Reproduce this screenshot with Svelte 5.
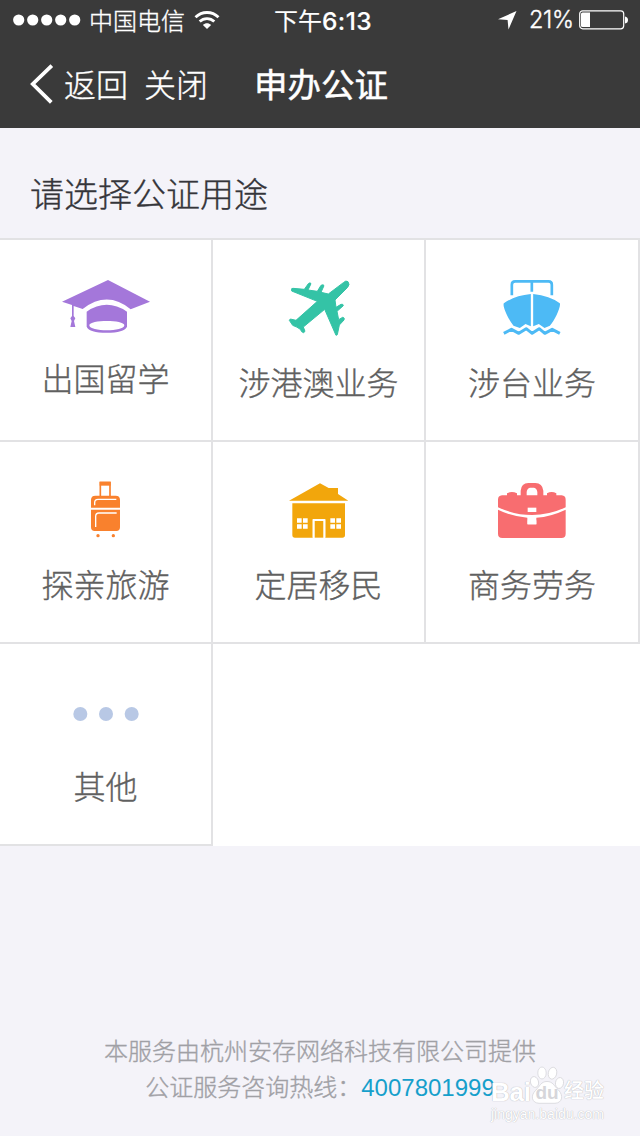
<script lang="ts">
  interface Category {
    icon: string;
    label: string;
    viewBox: string;
  }

  const categories: Category[] = [
    { icon: "cap", label: "出国留学", viewBox: "15 15 303 195" },
    { icon: "plane", label: "涉港澳业务", viewBox: "-36 15 303 195" },
    { icon: "ship", label: "涉台业务", viewBox: "-22.5 15 303 195" },
    { icon: "luggage", label: "探亲旅游", viewBox: "-60 6 303 195" },
    { icon: "house", label: "定居移民", viewBox: "-36 6 303 195" },
    { icon: "briefcase", label: "商务劳务", viewBox: "-24 6 303 195" },
    { icon: "more", label: "其他", viewBox: "165 147 303 195" },
  ];
</script>

<div class="screen">
  <header>
    <div class="status">
      <svg class="signal" width="68" height="12" viewBox="0 0 68 12" fill="#fff">
        {#each [0, 1, 2, 3, 4] as i}
          <circle cx={5.7 + i * 14} cy="6" r="5.6" />
        {/each}
      </svg>
      <span class="carrier">中国电信</span>
      <svg class="wifi" width="26" height="20" viewBox="0 0 26 20" fill="none" stroke="#fff" stroke-width="2.8">
        <path d="M1.5 7.3C8 .9 18 .9 24.5 7.3" />
        <path d="M5.7 11.6C9.8 7.6 16.2 7.6 20.3 11.6" />
        <path d="M13 19L8.9 14.9C11.3 12.7 14.7 12.7 17.1 14.9Z" fill="#fff" stroke="none" />
      </svg>
      <span class="time">下午<span class="digits">6:13</span></span>
      <svg class="location" width="19" height="19" viewBox="0 0 19 19" fill="#fff">
        <path d="M18.5 0L10.5 18.5L9.6 9L0 8.2Z" />
      </svg>
      <span class="percent">21%</span>
      <svg class="battery" width="50" height="20" viewBox="0 0 50 20">
        <rect x=".7" y=".8" width="44" height="18" rx="3" fill="none" stroke="#fff" stroke-width="1.2" />
        <path d="M3.5 2.5H11V17H3.5Q2 17 2 15.5V4Q2 2.5 3.5 2.5Z" fill="#fff" />
        <path d="M46 6.5Q49 7 49 10T46 13.5Z" fill="#fff" />
      </svg>
    </div>
    <nav>
      <svg class="back" width="26" height="40" viewBox="0 0 26 40">
        <path d="M22.8 1.7L3.8 20L22.3 38.3" fill="none" stroke="#fff" stroke-width="3.8" />
      </svg>
      <span class="nav-item">返回</span>
      <span class="nav-item">关闭</span>
      <h1>申办公证</h1>
    </nav>
  </header>

  <h2>请选择公证用途</h2>

  <main>
    {#each categories as item}
      <div class="cell {item.icon}">
        <svg width="101" height="65" viewBox={item.viewBox}>
          {#if item.icon === "cap"}
            <path d="M36 95L174 30L300 95L242 118Q172 60 98 117L71 108V138L76 145L72 153L76 171H61L65 153L61 145L66 138V105Z" />
            <path fill-rule="evenodd" d="M110 125Q170 84 231 125V170Q222 188 170 188T110 170ZM118 166C118 186 223 186 223 166C223 149 118 149 118 166Z" />
          {:else if item.icon === "plane"}
            <path
              stroke="currentColor"
              stroke-width="3"
              stroke-linejoin="round"
              d="M204 35Q211 43 202 53L165 90L168 112L183 103Q190 101 190 107L171 124L176 149L188 142Q195 143 192 150L178 165L172 194L168 196L134 118L70 171L75 184L71 188Q64 187 61 178Q52 171 38 166L28 151L31 147L48 151L112 94L35 63L35 56L39 55L73 58L85 41Q91 36 93 41L84 60L112 64L123 46Q131 42 132 47L123 67L145 72L190 38Q198 30 204 35Z"
            />
          {:else if item.icon === "ship"}
            <path d="M67 76V44Q67 34 77 34H177Q187 34 187 44V76M127 34V65" fill="none" stroke="currentColor" stroke-width="8" />
            <path d="M124 72V169L108 162L91 174L72 167C57 148 38 109 43 100Q74 77 124 72ZM131 72Q181 77 211 100C215 109 195 153 181 167L165 174L148 162L131 169Z" />
            <path d="M43 190L66 178L88 190L110 176L128 190L149 176L166 190L188 178L211 190" fill="none" stroke="currentColor" stroke-width="9" stroke-linejoin="round" />
          {:else if item.icon === "luggage"}
            <path d="M76 65V23H105V65" fill="none" stroke="currentColor" stroke-width="5" />
            <path d="M74 20H107V32H74Z" />
            <path d="M61 62H122Q135 62 135 75V98H48V75Q48 62 61 62ZM48 104H135V157Q135 168 124 168H59Q48 168 48 157Z" />
            <path d="M59 91V83Q59 73 69 73H124M62 156V124Q62 114 72 114H125" fill="none" stroke="#fff" stroke-width="4" />
            <circle cx="69" cy="182" r="5" />
            <circle cx="115" cy="182" r="5" />
          {:else if item.icon === "house"}
            <path d="M27 77L120 25L146 39H174V57L205 77Z" />
            <path d="M37 85H195V180Q195 188 187 188H135V132H99V188H45Q37 188 37 180Z" />
            <path d="M104 138H130V188H104Z" />
            <path d="M51 130H65V143H51ZM69 130H83V143H69ZM51 148H65V161H51ZM69 148H83V161H69ZM151 130H165V143H151ZM169 130H183V143H169ZM151 148H165V161H151ZM169 148H183V161H169Z" fill="#fff" />
            <path d="M100 188V135H134V188" fill="none" stroke="#fff" stroke-width="5" />
          {:else if item.icon === "briefcase"}
            <path d="M92 61V47Q94 24 115 24H136Q157 24 160 47V61H171V55Q185 47 199 55V61H215Q227 62 227 74V97Q127 143 24 97V74Q24 62 36 61H51V55Q65 47 81 55V61ZM110 61H142V51Q140 39 132 38H120Q111 40 110 51Z" fill-rule="evenodd" />
            <path d="M24 104Q67 125 112 128V148H139V128Q183 125 227 104V176Q227 189 214 189H37Q24 189 24 176Z" />
            <path d="M113 98H139V111H113Z" fill="#fff" />
            <path d="M113 136H139V148H113Z" fill="#fff" />
          {:else}
            <circle cx="241" cy="252" r="21" />
            <circle cx="318" cy="252" r="21" />
            <circle cx="395" cy="252" r="21" />
          {/if}
        </svg>
        <span class="label">{item.label}</span>
      </div>
    {/each}
  </main>

  <footer>
    <p>本服务由杭州安存网络科技有限公司提供</p>
    <p>公证服务咨询热线：<span class="phone">4007801999</span></p>
  </footer>

  <div class="watermark">
    <div class="brand">
      <span class="bai">Bai</span>
      <span class="paw">
        <svg width="34" height="38" viewBox="0 0 34 38" fill="#fff" stroke="#d6d6da" stroke-width=".8">
          <ellipse cx="4.5" cy="16" rx="4" ry="5.5" transform="rotate(-15 4.5 16)" />
          <ellipse cx="12" cy="7" rx="4.2" ry="6" />
          <ellipse cx="22.5" cy="7.2" rx="4.2" ry="6" transform="rotate(12 22.5 7.2)" />
          <ellipse cx="29.5" cy="17" rx="4" ry="5.5" transform="rotate(10 29.5 17)" />
          <path d="M17 15.5C23 15.5 24 20 28.5 24C34 30 32 37 25 37.3H9C2 37 0 30 5.5 24.5C10 20 11 15.5 17 15.5Z" />
        </svg>
        <span class="du">du</span>
      </span>
      <span class="jingyan">经验</span>
    </div>
    <div class="site">jingyan.baidu.com</div>
  </div>
</div>

<style>
  :global(body) {
    background: #f4f3f9;
  }

  .screen {
    position: relative;
    display: flex;
    flex-direction: column;
    width: 640px;
    height: 1136px;
    overflow: hidden;
    background: #f4f3f9;
    color: #35353a;
    font-family: "Noto Sans CJK SC", sans-serif;
    font-weight: 300;
    -webkit-text-stroke: 0.35px currentColor;
  }

  h1,
  h2,
  p {
    margin: 0;
    font-weight: inherit;
  }

  svg {
    display: block;
    flex: none;
  }

  header {
    height: 128px;
    background: #3a3a3a;
    color: #fff;
  }

  .status {
    display: flex;
    align-items: center;
    height: 40px;
    padding-left: 13px;
    font-size: 24px;
    line-height: 40px;
    white-space: nowrap;
  }

  .carrier {
    width: 96px;
    margin-left: 8px;
  }

  .wifi {
    margin-left: 9px;
  }

  .time {
    width: 98px;
    margin-left: 54px;
    font-weight: 400;
    -webkit-text-stroke-width: 0.15px;
  }

  .digits {
    font-family: Inter, sans-serif;
    font-size: 24.5px;
    font-weight: 500;
    letter-spacing: 0.4px;
  }

  .location {
    margin-left: 126px;
  }

  .percent {
    width: 45px;
    margin-left: 12px;
    font-family: Inter, sans-serif;
    font-size: 23.5px;
    letter-spacing: -0.3px;
  }

  .battery {
    margin-left: 5px;
  }

  nav {
    display: flex;
    align-items: center;
    height: 88px;
    padding-left: 29px;
    font-size: 32px;
    line-height: 48px;
  }

  .nav-item,
  h1 {
    padding-bottom: 2px;
  }

  .nav-item {
    margin-left: 9px;
  }

  .nav-item + .nav-item {
    margin-left: 16px;
  }

  h1 {
    margin-left: 46px;
    font-size: 33.5px;
    font-weight: 400;
    -webkit-text-stroke-width: 0.5px;
  }

  h2 {
    height: 110px;
    padding-left: 30px;
    box-sizing: border-box;
    font-size: 34px;
    line-height: 130px;
  }

  main {
    display: grid;
    grid-template-columns: 213px 213px 214px;
    grid-auto-rows: 202px;
    border-top: 2px solid #e2e2e4;
    background: #fff;
  }

  .cell {
    display: flex;
    flex-direction: column;
    align-items: center;
    box-sizing: border-box;
    padding-top: 35px;
    border-right: 2px solid #e2e2e4;
    border-bottom: 2px solid #e2e2e4;
  }

  .cell svg {
    fill: currentColor;
  }

  .label {
    margin-top: 17px;
    color: #606060;
    font-size: 32px;
    line-height: 48px;
  }

  .cap .label {
    margin-top: 13px;
  }

  .cap {
    color: #a477da;
  }

  .plane {
    color: #34c3a6;
  }

  .ship {
    color: #4dbaf5;
  }

  .luggage {
    color: #f9812d;
  }

  .house {
    color: #f2a60c;
  }

  .briefcase {
    color: #f86d70;
  }

  .more {
    color: #b8c8e5;
  }

  footer {
    margin-top: auto;
    padding-bottom: 30px;
    color: #a0a0a5;
    font-size: 24px;
    line-height: 36px;
    text-align: center;
  }

  .phone {
    color: #169fcb;
    font-family: "Liberation Sans", sans-serif;
    font-weight: 400;
    -webkit-text-stroke-width: 0;
  }

  .watermark {
    position: absolute;
    left: 491px;
    top: 1066px;
    color: #fff;
    font-family: "Liberation Sans", "Noto Sans CJK SC", sans-serif;
    -webkit-text-stroke-width: 0;
    text-shadow:
      0 0 1px #b8b8bc,
      0 0 1px #ccccd0;
  }

  .brand {
    display: flex;
    align-items: flex-end;
    height: 38px;
    line-height: 24px;
  }

  .bai {
    width: 39px;
    font-size: 26px;
    font-weight: 700;
    letter-spacing: -0.3px;
  }

  .paw {
    display: grid;
    place-items: end center;
    width: 34px;
  }

  .paw > * {
    grid-area: 1 / 1;
  }

  .du {
    z-index: 1;
    color: #d6d6da;
    font-size: 19px;
    font-weight: 700;
    line-height: 22px;
    text-shadow: none;
  }

  .jingyan {
    font-size: 20px;
    font-weight: 500;
    line-height: 26px;
  }

  .site {
    margin-top: 2px;
    font-size: 14px;
    line-height: 16px;
  }
</style>
